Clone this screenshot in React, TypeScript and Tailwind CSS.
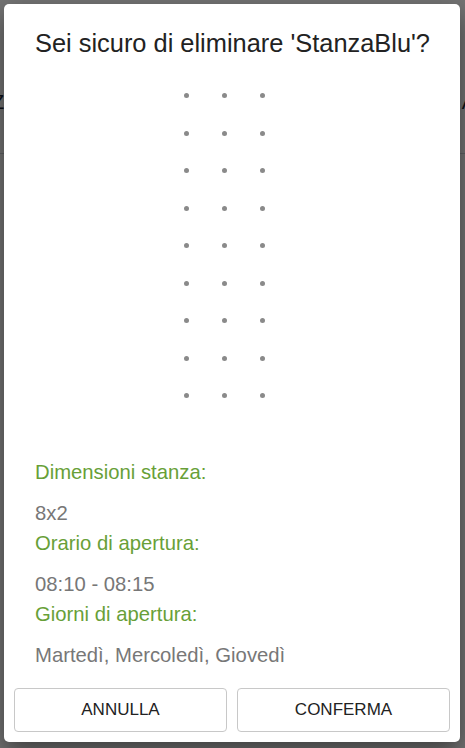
import React from "react";

const rows = Array.from({ length: 9 });
const cols = Array.from({ length: 3 });

const details = [
  { label: "Dimensioni stanza:", value: "8x2" },
  { label: "Orario di apertura:", value: "08:10 - 08:15" },
  { label: "Giorni di apertura:", value: "Martedì, Mercoledì, Giovedì" },
];

const App = () => {
  return (
    <div
      className="relative w-[465px] h-[748px] overflow-hidden bg-white"
      style={{ fontFamily: '"Liberation Sans", Arial, sans-serif' }}
    >
      {/* page behind the dialog */}
      <div className="flex items-end justify-between h-[154px] pb-[36px] border-b border-gray-300 text-[20px] text-gray-800">
        <span className="-ml-[8px]">Z</span>
        <span className="-mr-[10px]">A</span>
      </div>

      {/* backdrop */}
      <div className="absolute inset-0 bg-black/55 flex items-start">
        <div className="mt-[4px] ml-[4px] w-[456px] h-[738px] bg-white rounded-[5px] shadow-[0_10px_24px_rgba(0,0,0,0.45)] flex flex-col">
          <h2 className="pt-[24px] px-[31px] text-[25.4px] leading-[30px] text-[#222] font-normal whitespace-nowrap">
            Sei sicuro di eliminare 'StanzaBlu'?
          </h2>

          <div className="mt-[19px] ml-[163px] flex flex-col">
            {rows.map((_, r) => (
              <div key={r} className="flex h-[37.5px] items-center">
                {cols.map((_, c) => (
                  <div key={c} className="w-[38px] flex justify-center">
                    <span className="block w-[5px] h-[5px] rounded-full bg-[#8a8a8a]" />
                  </div>
                ))}
              </div>
            ))}
          </div>

          <div className="mt-[42px] px-[31px] flex flex-col text-[20.3px] leading-[30px]">
            {details.map((d) => (
              <div key={d.label} className="flex flex-col">
                <span className="text-[#689f38] mb-[11px]">{d.label}</span>
                <span className="text-[#777]">{d.value}</span>
              </div>
            ))}
          </div>

          <div className="mt-auto px-[10px] pb-[10px] flex gap-[10px]">
            <button className="flex-1 h-[44px] rounded-[4px] border border-[#c8c8c8] bg-white text-[17px] text-[#222]">
              ANNULLA
            </button>
            <button className="flex-1 h-[44px] rounded-[4px] border border-[#c8c8c8] bg-white text-[17px] text-[#222]">
              CONFERMA
            </button>
          </div>
        </div>
      </div>
    </div>
  );
};

export default App;
